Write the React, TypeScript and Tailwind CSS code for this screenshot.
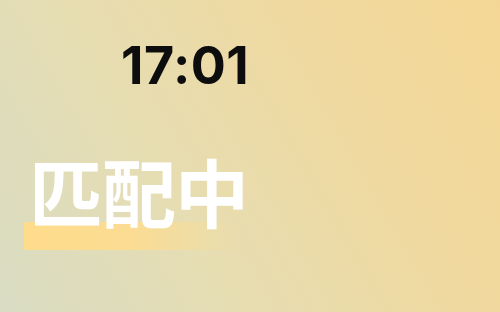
import React from 'react';

const App: React.FC = () => {
  return (
    <div className="w-[500px] h-[312px] overflow-hidden bg-[linear-gradient(60deg,#d9dcc3_0%,#e6ddb2_35%,#f0d99f_70%,#f4d796_100%)]">
      <div className="flex flex-col pt-[36px]">
        <div
          className="pl-[121px] text-[52px] leading-[60px] font-bold text-[#0d0d0d] tracking-[0.5px]"
          style={{ fontFamily: 'Inter, "Open Sans", sans-serif' }}
        >
          17:01
        </div>
        <div className="relative mt-[52px] ml-[24px] w-[230px]">
          <div className="absolute left-0 top-[74px] h-[28px] w-[218px] bg-[linear-gradient(90deg,#fedc8b_0%,#fbdc93_50%,rgba(244,218,160,0)_100%)]" />
          <div
            className="relative pl-[5px] text-[74px] leading-[84px] font-bold text-white tracking-[-1px] whitespace-nowrap"
            style={{ fontFamily: '"Noto Sans CJK SC", sans-serif' }}
          >
            匹配中
          </div>
        </div>
      </div>
    </div>
  );
};

export default App;
